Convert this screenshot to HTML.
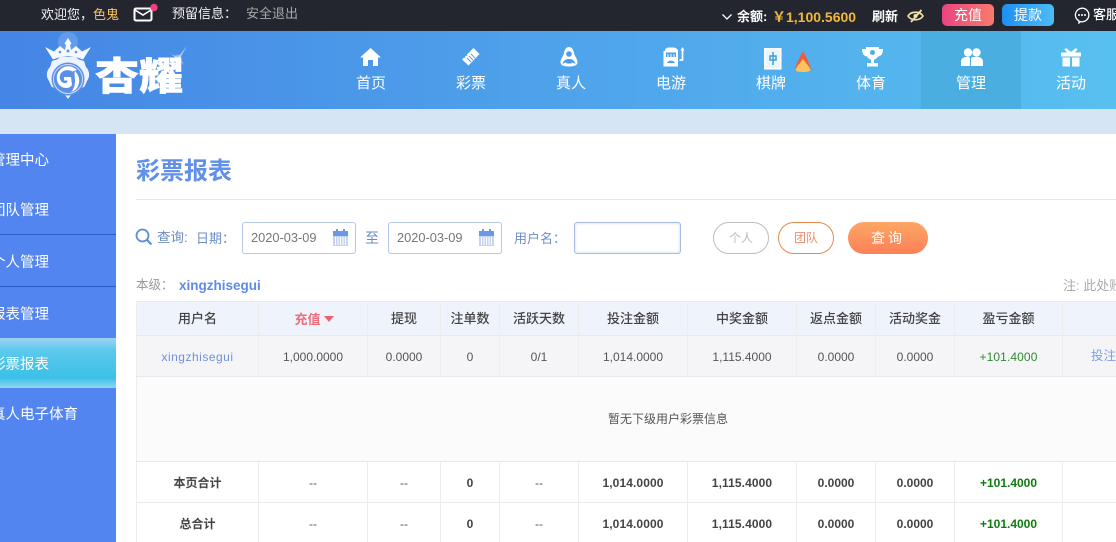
<!DOCTYPE html>
<html lang="zh"><head><meta charset="utf-8"><title>彩票报表</title>
<style>
*{box-sizing:border-box;margin:0;padding:0}
html,body{width:1116px;height:542px;overflow:hidden;background:#fff}
body{position:relative;font-family:"Liberation Sans","Noto Sans CJK SC",sans-serif;font-size:13px;color:#444}
.a{position:absolute;white-space:nowrap;line-height:1}
.b{position:absolute}
.nav{position:absolute;top:76px;width:100px;text-align:center;color:#fff;font-size:15px;line-height:16px}
.side{position:absolute;left:-9px;color:#fff;font-size:14.5px;line-height:16px;white-space:nowrap}
.c{position:absolute;text-align:center;font-size:12px;line-height:14px;white-space:nowrap;color:#555}
.h{font-size:13px;color:#444;font-weight:500}
.t{font-weight:700;color:#444}
.vl{position:absolute;width:1px;background:#eceded;top:302px;height:240px}
.hl{position:absolute;left:136px;width:980px;height:1px;background:#e8e9ed}
.inp{position:absolute;top:222px;height:32px;background:#fff;border:1px solid #b4c8ee;border-radius:3px}
</style></head><body>
<!-- top bar -->
<div class="b" style="left:0;top:0;width:1116px;height:31px;background:#23262f"></div>
<div class="a" style="left:41px;top:8px;color:#f2f2f2;font-size:13px">欢迎您，</div>
<div class="a" style="left:93px;top:8px;color:#f6c264;font-size:13px">色鬼</div>
<svg class="b" style="left:133px;top:3px" width="26" height="20" viewBox="0 0 26 20"><rect x="1.5" y="5.5" width="17" height="12" rx="1.5" fill="none" stroke="#fff" stroke-width="2"/><path d="M2 7l8 5 8-5" fill="none" stroke="#fff" stroke-width="1.6"/><circle cx="21" cy="4.5" r="3.7" fill="#f0407f"/></svg>
<div class="a" style="left:172px;top:7px;color:#f2f2f2;font-size:13px">预留信息：</div>
<div class="a" style="left:246px;top:7px;color:#a8a8a8;font-size:13px">安全退出</div>
<svg class="b" style="left:721px;top:13px" width="12" height="9" viewBox="0 0 12 9"><path d="M1.5 1.5L6 6l4.5-4.5" fill="none" stroke="#fff" stroke-width="1.3"/></svg>
<div class="a" style="left:737px;top:10px;color:#fff;font-size:13px;font-weight:700">余额:</div>
<div class="a" style="left:772px;top:10px;color:#f0b93a;font-size:14px;font-weight:700">￥1,100.5600</div>
<div class="a" style="left:872px;top:10px;color:#fff;font-size:13px;font-weight:700">刷新</div>
<svg class="b" style="left:907px;top:8px" width="18" height="16" viewBox="0 0 18 16"><path d="M1 8c3-5 12-5 15 0c-3 5-12 5-15 0z" fill="none" stroke="#f0dfa8" stroke-width="1.7"/><circle cx="8.5" cy="8" r="2" fill="#f0dfa8"/><path d="M14.5 2L4 14" stroke="#f0dfa8" stroke-width="1.8"/></svg>
<div class="b" style="left:942px;top:4px;width:52px;height:22px;border-radius:5px;background:linear-gradient(90deg,#e9457f,#f97a6c);color:#fff;font-size:14px;line-height:22px;text-align:center">充值</div>
<div class="b" style="left:1002px;top:4px;width:52px;height:22px;border-radius:5px;background:linear-gradient(90deg,#1f8ff2,#4dbcf6);color:#fff;font-size:14px;line-height:22px;text-align:center">提款</div>
<svg class="b" style="left:1074px;top:7px" width="16" height="17" viewBox="0 0 16 17"><path d="M8 1.2a6.8 6.8 0 1 1-1.6 13.4L5 16v-2A6.8 6.8 0 0 1 8 1.2z" fill="none" stroke="#fff" stroke-width="1.3"/><circle cx="5" cy="8" r="1" fill="#fff"/><circle cx="8" cy="8" r="1" fill="#fff"/><circle cx="11" cy="8" r="1" fill="#fff"/></svg>
<div class="a" style="left:1093px;top:8px;color:#fff;font-size:13px;font-weight:500">客服</div>

<!-- nav -->
<div class="b" style="left:0;top:31px;width:1116px;height:78px;background:linear-gradient(90deg,#4585e5,#58c0f0)"></div>
<div class="b" style="left:921px;top:31px;width:100px;height:78px;background:#4aaee0"></div>
<!-- logo -->
<svg class="b" style="left:30px;top:32px" width="170" height="76" viewBox="0 0 170 76">
<circle cx="38" cy="10" r="10" fill="#fff" opacity=".16"/>
<path d="M15 15L24 19.500 30 14 35 18 36 13 34.500 11.500 38 6 41.500 11.500 40 13 41 18 46 14 52 19.500 61 15 53 27.500Q38 21 23 27.500Z" fill="#f5f9ff"/>
<circle cx="30" cy="20" r="1.300" fill="#5b93e6"/><circle cx="46" cy="20" r="1.300" fill="#5b93e6"/><circle cx="38" cy="19" r="1.500" fill="#5b93e6"/>
<path d="M38 25c3 0 7-1 9 1 2 2 4 2 7 3 1 2 1 4 2 6 4 4 4 10 1 14-1 2-2 5-3 6-3 1-5 2-7 4-2 1-5 2-6 4l-3 4-3-4c-1-2-4-3-6-4-2-2-4-3-7-4-1-1-2-4-3-6-3-4-3-10 1-14 1-2 1-4 2-6 3-1 5-1 7-3 2-2 6-1 9-1z" fill="#eef4ff"/>
<circle cx="38" cy="47" r="16.500" fill="#5a90e6"/>
<circle cx="38" cy="47" r="14.500" fill="none" stroke="#cfe0fb" stroke-width="1"/>
<path d="M47 38c-5-5-13-5-17 0-5 5-4 14 2 17 4 2 8 1 10-2l-1-8h-7v3.500h3.500c0 3-3 3-5 2-3-2-4-7-1-10 3-3 7-3 11-1z" fill="#fff"/>
<path d="M45 39c3 3 5 8 4 12-1 5-4 8-8 9 3-3 4-7 4-12 0-3-1-6 0-9z" fill="#fff"/>
</svg>
<div class="a" style="left:95px;top:54px;color:#fff;font-size:44px;font-weight:900;transform:scale(1,.88);transform-origin:0 0;font-family:'Noto Sans CJK SC',sans-serif;line-height:44px;-webkit-text-stroke:.7px #fff">杏耀</div>
<svg class="b" style="left:166px;top:44px" width="24" height="26" viewBox="0 0 24 26"><path d="M12 13L21 2 14 14 18 21 12 15 5 20 10 14 5 10z" fill="#fff" opacity=".55"/><circle cx="12" cy="14" r="3.500" fill="#fff" opacity=".35"/></svg>

<svg class="b" style="left:360px;top:48px" width="21" height="18" viewBox="0 0 21 18"><path d="M10.500 0L21 9.500h-3V18h-5v-6H8v6H3V9.500H0z" fill="#fff"/></svg>
<svg class="b" style="left:461px;top:47px" width="20" height="20" viewBox="0 0 20 20"><path d="M12.500 1l6 6-11 11.500-6.500-6 2-2 1.500 1-.5-2 1-1 1.500 1-.5-2z" fill="#fff"/><path d="M8 9l4 4M10 7l4 4M6 11l4 4" stroke="#5aa3ea" stroke-width="1"/></svg>
<svg class="b" style="left:559px;top:47px" width="20" height="20" viewBox="0 0 20 20"><path d="M10 0c3 0 4.500 3 5 6 .5 3 3.500 6 3.500 9 0 3-2.500 4.500-8.500 4.500S1.500 18 1.500 15c0-3 3-6 3.500-9s2-6 5-6z" fill="#fff"/><circle cx="10" cy="7" r="2.800" fill="#4b9de9"/><path d="M3.500 17c1-4 4-5 6.500-5s5.500 1 6.500 5l-3-1.500c-1 1.500-6 1.500-7 0z" fill="#4b9de9"/></svg>
<svg class="b" style="left:663px;top:47px" width="22" height="20" viewBox="0 0 22 20"><path d="M2 4c0-2 1.500-3.500 3.500-3.500h5C12.500.5 15 2 15 4v15.500H.5V4z" fill="#fff"/><rect x="3" y="5.500" width="10" height="4.500" fill="#4ca0e9"/><path d="M5 7v3M8 7v3M11 7v3" stroke="#fff"/><path d="M4 16c1-3 7-3 8 0z" fill="#4ca0e9"/><path d="M19.500 3v10h-3" fill="none" stroke="#fff" stroke-width="1.700"/><path d="M19.500 0l2 3.500h-4z" fill="#fff"/></svg>
<svg class="b" style="left:764px;top:48px" width="18" height="22" viewBox="0 0 18 22"><rect x=".8" y=".8" width="16" height="20" fill="#eaf5fc" stroke="#fff" stroke-width="1.500"/><path d="M9 4v13M6 8h6v4H6z" fill="none" stroke="#3f9ed8" stroke-width="1.500"/></svg>
<svg class="b" style="left:794px;top:51px" width="18" height="21" viewBox="0 0 18 21"><path d="M9 0C11 4 16 13 17 18c0 2-3 3-8 3s-8-1-8-3C2 13 7 4 9 0z" fill="#ef5d3c"/><path d="M9 8c2 3 6 7 7.500 10.500 0 2-3 2.500-7.500 2.500s-7.500-.5-7.500-2.500C3 15 7 11 9 8z" fill="#f9c35f"/></svg>
<svg class="b" style="left:862px;top:47px" width="21" height="20" viewBox="0 0 21 20"><path d="M4 0h13v2h4c0 5-2 7-5 7.500-1 2-3 3-4 3.200V16h4v3.500H5V16h4v-3.300c-1-.2-3-1.200-4-3.200C2 9 0 7 0 2h4z" fill="#fff"/><circle cx="10.500" cy="5.500" r="2.500" fill="#4eade6"/></svg>
<svg class="b" style="left:961px;top:48px" width="22" height="18" viewBox="0 0 22 18"><circle cx="7" cy="4.500" r="4.200" fill="#fff"/><circle cx="15.500" cy="4.500" r="4.200" fill="#fff"/><path d="M0 18v-4c0-3 2-5 5-5h2c1 0 2 .5 2 1.500V18z" fill="#fff"/><path d="M10 18v-7c0-1.500 1-2 2-2h5c3 0 5 2 5 5v4z" fill="#fff"/></svg>
<svg class="b" style="left:1061px;top:47px" width="20" height="20" viewBox="0 0 20 20"><path d="M5 1l5 4 5-4 1.500 1.500L14 5.500h6v4H0v-4h6L3.500 2.500z" fill="#fff"/><rect x="1.500" y="10.500" width="7.500" height="9" fill="#fff"/><rect x="11" y="10.500" width="7.500" height="9" fill="#fff"/></svg>

<div class="nav" style="left:321px">首页</div>
<div class="nav" style="left:421px">彩票</div>
<div class="nav" style="left:521px">真人</div>
<div class="nav" style="left:621px">电游</div>
<div class="nav" style="left:721px">棋牌</div>
<div class="nav" style="left:821px">体育</div>
<div class="nav" style="left:921px">管理</div>
<div class="nav" style="left:1021px">活动</div>

<div class="b" style="left:0;top:109px;width:1116px;height:25px;background:#d6e5f3"></div>

<!-- sidebar -->
<div class="b" style="left:0;top:134px;width:116px;height:408px;background:#5285f0"></div>
<div class="b" style="left:0;top:234px;width:116px;height:1px;background:#2c5cc8"></div>
<div class="b" style="left:0;top:286px;width:116px;height:1px;background:#2c5cc8"></div>
<div class="b" style="left:0;top:338px;width:116px;height:50px;background:linear-gradient(180deg,#9bd4f3 0,#5cc8ec 25%,#3cc0e8 80%,#8fd8f0 100%)"></div>
<div class="side" style="top:153px">管理中心</div>
<div class="side" style="top:203px">团队管理</div>
<div class="side" style="top:255px">个人管理</div>
<div class="side" style="top:307px">报表管理</div>
<div class="side" style="top:357px">彩票报表</div>
<div class="side" style="top:407px">真人电子体育</div>

<!-- heading -->
<div class="a" style="left:136px;top:159px;color:#6190ea;font-size:24px;font-weight:700;line-height:26px">彩票报表</div>
<div class="b" style="left:136px;top:199px;width:980px;height:1px;background:#e6e8ec"></div>

<!-- filter -->
<svg class="b" style="left:135px;top:228px" width="18" height="18" viewBox="0 0 18 18"><circle cx="7.500" cy="7.500" r="6" fill="none" stroke="#5d8fd8" stroke-width="1.800"/><path d="M12 12l4.500 4.500" stroke="#5d8fd8" stroke-width="2"/></svg>
<div class="a" style="left:157px;top:231px;color:#6d8dc4;font-size:13.500px">查询:</div>
<div class="a" style="left:196px;top:232px;color:#6d8dc4;font-size:13px">日期：</div>
<div class="inp" style="left:242px;width:114px"></div>
<div class="a" style="left:251px;top:232px;color:#777;font-size:12.800px">2020-03-09</div>
<div class="inp" style="left:388px;width:114px"></div>
<div class="a" style="left:397px;top:232px;color:#777;font-size:12.800px">2020-03-09</div>
<svg class="b" style="left:333px;top:229px" width="15" height="17" viewBox="0 0 15 17"><rect y="2" width="15" height="5" fill="#6b97e6"/><rect x="3" width="2" height="4" fill="#6b97e6"/><rect x="10" width="2" height="4" fill="#6b97e6"/><rect y="7" width="15" height="10" fill="#c6d3ec"/><path d="M2.500 8v8M5 8v8M7.500 8v8M10 8v8M12.500 8v8" stroke="#fff"/></svg>
<svg class="b" style="left:479px;top:229px" width="15" height="17" viewBox="0 0 15 17"><rect y="2" width="15" height="5" fill="#6b97e6"/><rect x="3" width="2" height="4" fill="#6b97e6"/><rect x="10" width="2" height="4" fill="#6b97e6"/><rect y="7" width="15" height="10" fill="#c6d3ec"/><path d="M2.500 8v8M5 8v8M7.500 8v8M10 8v8M12.500 8v8" stroke="#fff"/></svg>
<div class="a" style="left:365px;top:231px;color:#6d8dc4;font-size:14px">至</div>
<div class="a" style="left:514px;top:232px;color:#6d8dc4;font-size:13px">用户名：</div>
<div class="inp" style="left:574px;width:107px;border-color:#a9bce4;box-shadow:inset 0 0 3px #c8d6f2"></div>
<div class="b" style="left:713px;top:222px;width:56px;height:32px;border:1px solid #bdbdbd;border-radius:16px;color:#bbb;font-size:12px;line-height:30px;text-align:center">个人</div>
<div class="b" style="left:778px;top:222px;width:56px;height:32px;border:1px solid #e88a4a;border-radius:16px;color:#ee8e6e;font-size:12px;line-height:30px;text-align:center">团队</div>
<div class="b" style="left:848px;top:222px;width:80px;height:32px;border-radius:16px;background:linear-gradient(180deg,#fda765,#fd7f57);color:#fff;font-size:14px;line-height:32px;text-align:center;letter-spacing:3px">查询</div>

<div class="a" style="left:136px;top:279px;color:#999;font-size:12.500px">本级：</div>
<div class="a" style="left:179px;top:279px;color:#5e8be6;font-size:13.500px;font-weight:700">xingzhisegui</div>
<div class="a" style="left:1063px;top:279px;color:#aaa;font-size:13px">注: 此处账</div>

<!-- table -->
<div class="b" style="left:136px;top:301px;width:980px;height:35px;background:#eff3fb"></div>
<div class="b" style="left:136px;top:336px;width:980px;height:41px;background:#f5f5f7"></div>
<div class="b" style="left:136px;top:377px;width:980px;height:85px;background:#fbfbfb"></div>
<div class="b" style="left:136px;top:301px;width:1px;height:241px;background:#eceded"></div>
<div class="hl" style="top:301px"></div><div class="hl" style="top:335px"></div><div class="hl" style="top:376px"></div><div class="hl" style="top:461px"></div><div class="hl" style="top:502px"></div>
<div class="vl" style="left:258px;height:74px"></div><div class="vl" style="left:367px;height:74px"></div><div class="vl" style="left:440px;height:74px"></div><div class="vl" style="left:499px;height:74px"></div><div class="vl" style="left:578px;height:74px"></div><div class="vl" style="left:687px;height:74px"></div><div class="vl" style="left:796px;height:74px"></div><div class="vl" style="left:875px;height:74px"></div><div class="vl" style="left:954px;height:74px"></div><div class="vl" style="left:1062px;height:74px"></div>
<div class="vl" style="left:258px;top:462px;height:80px"></div><div class="vl" style="left:367px;top:462px;height:80px"></div><div class="vl" style="left:440px;top:462px;height:80px"></div><div class="vl" style="left:499px;top:462px;height:80px"></div><div class="vl" style="left:578px;top:462px;height:80px"></div><div class="vl" style="left:687px;top:462px;height:80px"></div><div class="vl" style="left:796px;top:462px;height:80px"></div><div class="vl" style="left:875px;top:462px;height:80px"></div><div class="vl" style="left:954px;top:462px;height:80px"></div><div class="vl" style="left:1062px;top:462px;height:80px"></div>

<!-- header row -->
<div class="c h" style="left:137px;width:121px;top:312px">用户名</div>
<div class="c h" style="left:260px;width:95px;top:313px;color:#ee6c7c;font-weight:700">充值</div>
<div class="b" style="left:324px;top:316px;width:0;height:0;border-left:5px solid transparent;border-right:5px solid transparent;border-top:6px solid #ee6070"></div>
<div class="c h" style="left:368px;width:72px;top:312px">提现</div>
<div class="c h" style="left:441px;width:58px;top:312px">注单数</div>
<div class="c h" style="left:500px;width:78px;top:312px">活跃天数</div>
<div class="c h" style="left:579px;width:108px;top:312px">投注金额</div>
<div class="c h" style="left:688px;width:108px;top:312px">中奖金额</div>
<div class="c h" style="left:797px;width:78px;top:312px">返点金额</div>
<div class="c h" style="left:876px;width:78px;top:312px">活动奖金</div>
<div class="c h" style="left:955px;width:107px;top:312px">盈亏金额</div>

<!-- row 1 -->
<div class="c" style="left:137px;width:121px;top:350px;color:#6f8fdc;letter-spacing:.5px">xingzhisegui</div>
<div class="c" style="left:259px;width:108px;top:350px">1,000.0000</div>
<div class="c" style="left:368px;width:72px;top:350px">0.0000</div>
<div class="c" style="left:441px;width:58px;top:350px">0</div>
<div class="c" style="left:500px;width:78px;top:350px">0/1</div>
<div class="c" style="left:579px;width:108px;top:350px">1,014.0000</div>
<div class="c" style="left:688px;width:108px;top:350px">1,115.4000</div>
<div class="c" style="left:797px;width:78px;top:350px">0.0000</div>
<div class="c" style="left:876px;width:78px;top:350px">0.0000</div>
<div class="c" style="left:955px;width:107px;top:350px;color:#2f8a2f;letter-spacing:.1px">+101.4000</div>
<div class="a" style="left:1091px;top:350px;color:#7d9fe0;font-size:12.500px">投注</div>

<div class="c" style="left:137px;width:1182px;top:412px;text-align:left;padding-left:471px;color:#555">暂无下级用户彩票信息</div>

<!-- totals -->
<div class="c t" style="left:137px;width:121px;top:476px">本页合计</div>
<div class="c" style="left:259px;width:108px;top:476px">--</div>
<div class="c" style="left:368px;width:72px;top:476px">--</div>
<div class="c t" style="left:441px;width:58px;top:476px">0</div>
<div class="c" style="left:500px;width:78px;top:476px">--</div>
<div class="c t" style="left:579px;width:108px;top:476px;letter-spacing:.1px">1,014.0000</div>
<div class="c t" style="left:688px;width:108px;top:476px;letter-spacing:.1px">1,115.4000</div>
<div class="c t" style="left:797px;width:78px;top:476px">0.0000</div>
<div class="c t" style="left:876px;width:78px;top:476px">0.0000</div>
<div class="c t" style="left:955px;width:107px;top:476px;color:#0f7a0f">+101.4000</div>

<div class="c t" style="left:137px;width:121px;top:517px">总合计</div>
<div class="c" style="left:259px;width:108px;top:517px">--</div>
<div class="c" style="left:368px;width:72px;top:517px">--</div>
<div class="c t" style="left:441px;width:58px;top:517px">0</div>
<div class="c" style="left:500px;width:78px;top:517px">--</div>
<div class="c t" style="left:579px;width:108px;top:517px;letter-spacing:.1px">1,014.0000</div>
<div class="c t" style="left:688px;width:108px;top:517px;letter-spacing:.1px">1,115.4000</div>
<div class="c t" style="left:797px;width:78px;top:517px">0.0000</div>
<div class="c t" style="left:876px;width:78px;top:517px">0.0000</div>
<div class="c t" style="left:955px;width:107px;top:517px;color:#0f7a0f">+101.4000</div>
</body></html>
